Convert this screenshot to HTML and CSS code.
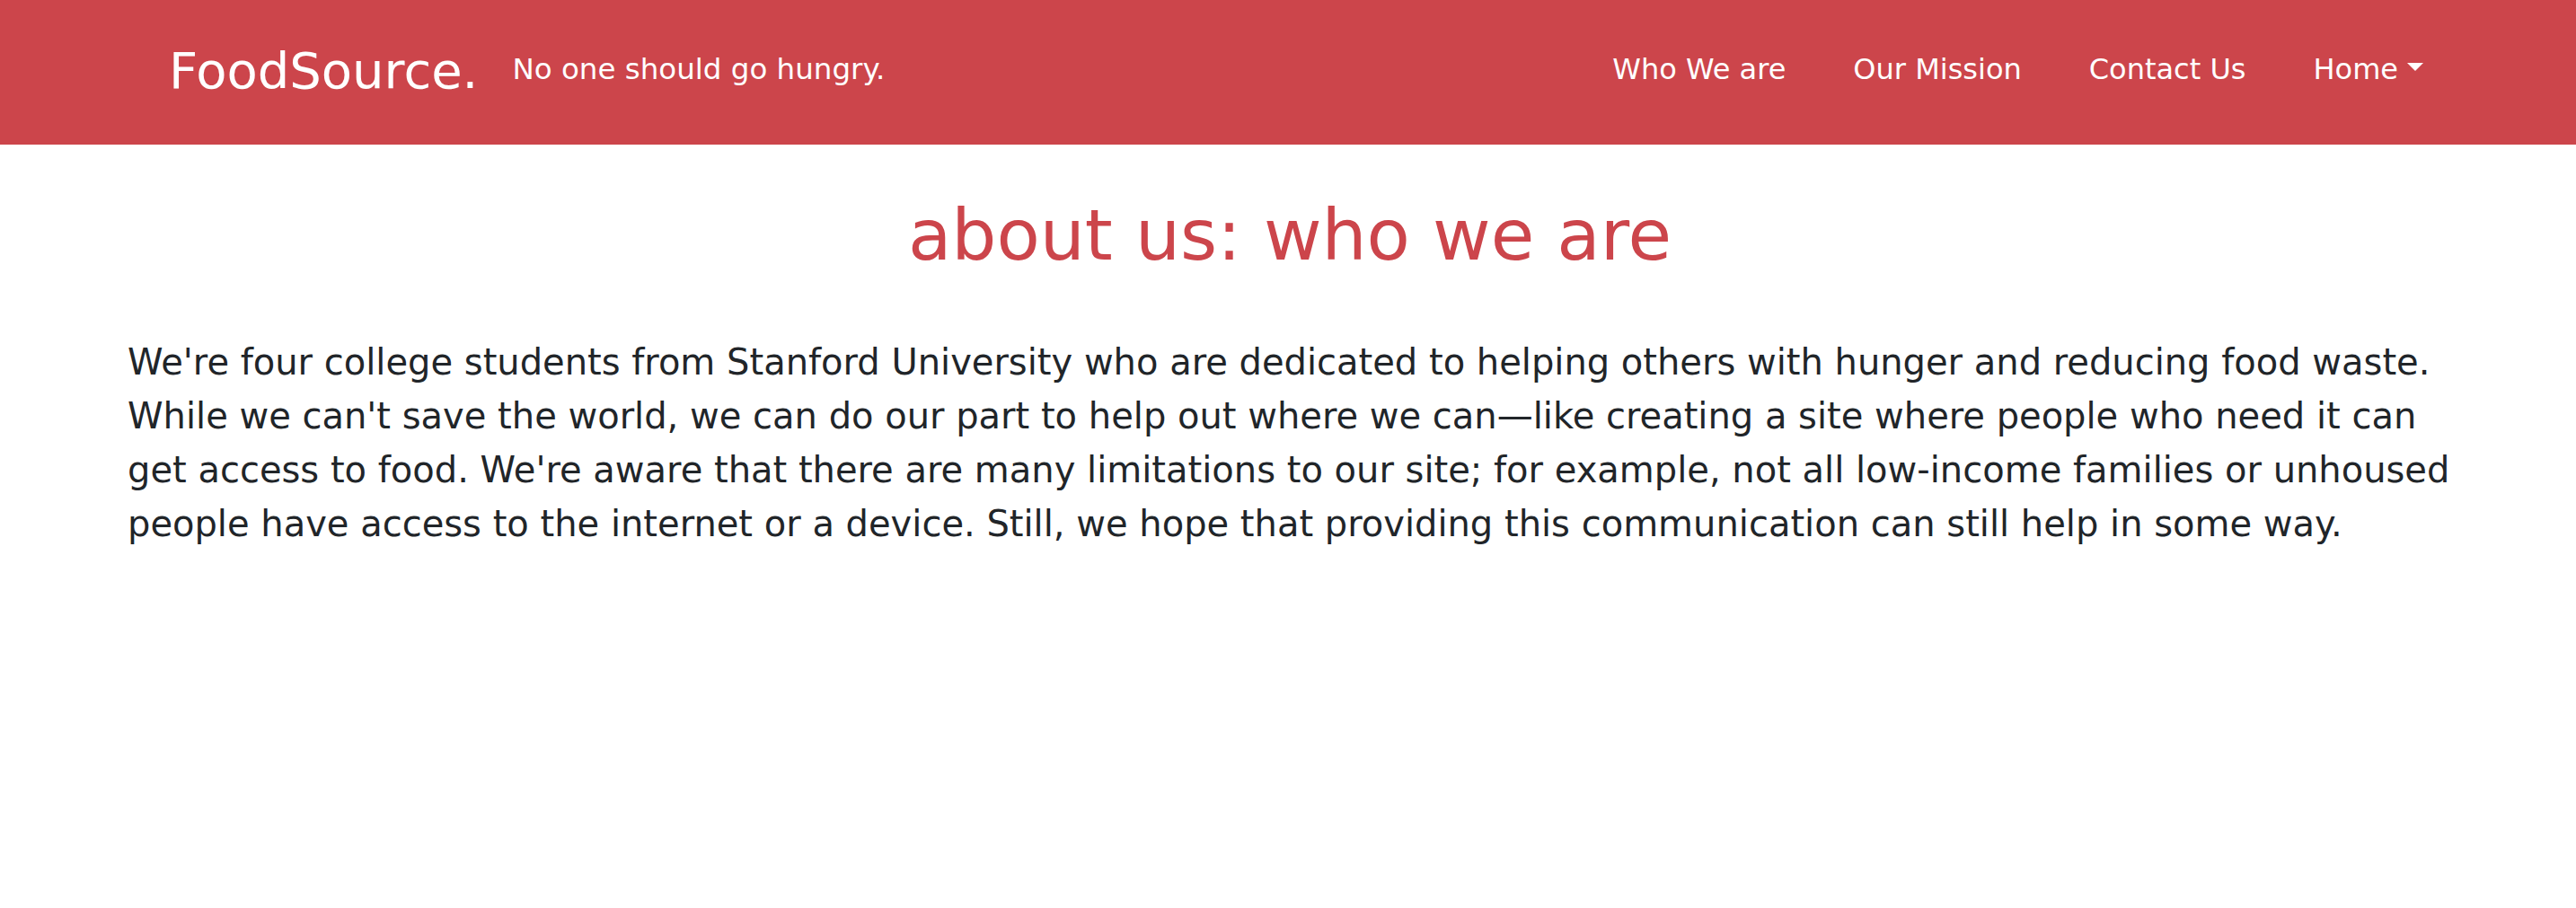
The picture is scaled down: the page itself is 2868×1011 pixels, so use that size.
FILE: index.html
```html
<!DOCTYPE html>
<html lang="en">
<head>
<meta charset="utf-8">
<title>FoodSource. | About Us</title>
<link rel="stylesheet" href="styles.css">
</head>
<body>
<header class="navbar">
  <div class="brand-group">
    <a class="brand" href="#">FoodSource.</a>
    <span class="tagline">No one should go hungry.</span>
  </div>
  <nav class="nav">
    <a class="nav-link" href="#">Who We are</a>
    <a class="nav-link" href="#">Our Mission</a>
    <a class="nav-link" href="#">Contact Us</a>
    <a class="nav-link dropdown" href="#">Home<span class="caret"></span></a>
  </nav>
</header>
<main class="container">
  <h1 class="title">about us: who we are</h1>
  <p class="about">We're four college students from Stanford University who are dedicated to helping others with hunger and reducing food waste. While we can't save the world, we can do our part to help out where we can—like creating a site where people who need it can get access to food. We're aware that there are many limitations to our site; for example, not all low-income families or unhoused people have access to the internet or a device. Still, we hope that providing this communication can still help in some way.</p>
</main>
</body>
</html>
```
FILE: styles.css
```css
* { box-sizing: border-box; }
body {
  margin: 0;
  font-family: "DejaVu Sans", sans-serif;
  color: #212529;
  background: #fff;
}
a { text-decoration: none; color: inherit; }

.navbar {
  height: 161px;
  background: #cc454b;
  display: flex;
  align-items: center;
  justify-content: space-between;
  padding: 0 170px 0 188px;
  color: #fff;
}
.brand-group {
  display: flex;
  align-items: center;
}
.brand {
  font-size: 56px;
  line-height: 84px;
  margin-bottom: 3px;
}
.tagline {
  font-size: 32.5px;
  line-height: 48px;
  margin-left: 38px;
  margin-bottom: 7px;
}
.nav {
  display: flex;
  align-items: center;
  gap: 75px;
}
.nav-link {
  font-size: 32px;
  line-height: 48px;
  margin-bottom: 7px;
  display: flex;
  align-items: center;
}
.caret {
  display: inline-block;
  width: 0;
  height: 0;
  margin-left: 10px;
  margin-top: -6px;
  border-top: 9px solid #fff;
  border-left: 9px solid transparent;
  border-right: 9px solid transparent;
}

.container {
  width: 2640px;
  margin: 0 auto;
  padding: 54px 24px 0 28px;
}
.title {
  margin: 0;
  text-align: center;
  font-weight: 400;
  font-size: 79px;
  line-height: 94px;
  color: #cc454b;
}
.about {
  margin: 64px 0 0;
  font-size: 40px;
  line-height: 60px;
}
```
